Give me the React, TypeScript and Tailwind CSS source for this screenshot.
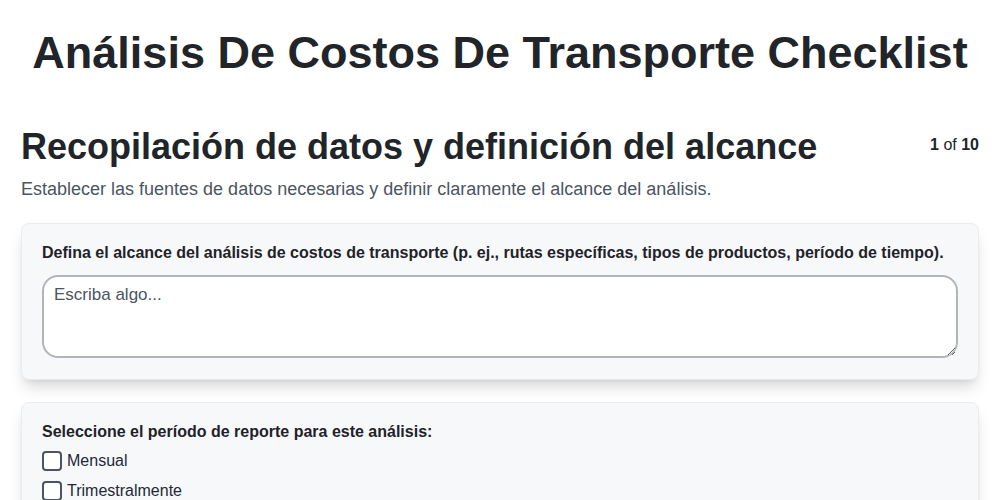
import { useState } from 'react'

const periods = ['Mensual', 'Trimestralmente', 'Semestralmente', 'Anualmente']

function Checkbox({ label }: { label: string }) {
  const [checked, setChecked] = useState(false)
  return (
    <label className="flex items-center gap-[5px] h-[30px] cursor-pointer">
      <input
        type="checkbox"
        checked={checked}
        onChange={() => setChecked(!checked)}
        className="appearance-none w-5 h-5 rounded-[4px] border-2 border-[#4b5563] bg-white"
      />
      <span className="text-base text-[#1f2937]">{label}</span>
    </label>
  )
}

export default function App() {
  return (
    <div className="min-h-screen bg-white text-[#212529]" style={{ fontFamily: '"Liberation Sans", Arial, sans-serif' }}>
      <h1 className="text-center text-[45px] font-bold leading-none pt-[30px] pb-[50px]">
        Análisis De Costos De Transporte Checklist
      </h1>

      <div className="px-[21px]">
        <div className="flex items-start justify-between">
          <h2 className="text-4xl font-bold leading-[44px] text-[#212529]">
            Recopilación de datos y definición del alcance
          </h2>
          <div className="text-base leading-6 pt-[8px] text-[#212529]">
            <span className="font-bold">1</span> of <span className="font-bold">10</span>
          </div>
        </div>
        <p className="mt-[6px] text-lg leading-7 text-[#4b5563]">
          Establecer las fuentes de datos necesarias y definir claramente el alcance del análisis.
        </p>

        <div className="mt-[20px] rounded-lg border border-[#eaecf0] bg-[#f7f8fa] px-5 pt-[17px] pb-[21px] shadow-[0_10px_15px_-3px_rgba(0,0,0,0.15),0_4px_6px_-4px_rgba(0,0,0,0.1)]">
          <label className="block text-base leading-6 font-bold text-[#1f2329] mb-[10px]">
            Defina el alcance del análisis de costos de transporte (p. ej., rutas específicas, tipos de productos, período de tiempo).
          </label>
          <textarea
            placeholder="Escriba algo..."
            className="block w-full h-[83px] rounded-2xl border-2 border-[#b0b5bb] bg-white px-[10px] py-[6px] text-[17px] leading-6 text-[#1f2937] placeholder:text-[#4b5563] outline-none"
          />
        </div>

        <div className="mt-[22px] rounded-lg border border-[#eaecf0] bg-[#f7f8fa] px-5 pt-[17px] pb-[21px] shadow-[0_10px_15px_-3px_rgba(0,0,0,0.15),0_4px_6px_-4px_rgba(0,0,0,0.1)]">
          <div className="text-base leading-6 font-bold text-[#1f2329] mb-[2px]">
            Seleccione el período de reporte para este análisis:
          </div>
          {periods.map((p) => (
            <Checkbox key={p} label={p} />
          ))}
        </div>
      </div>
    </div>
  )
}
